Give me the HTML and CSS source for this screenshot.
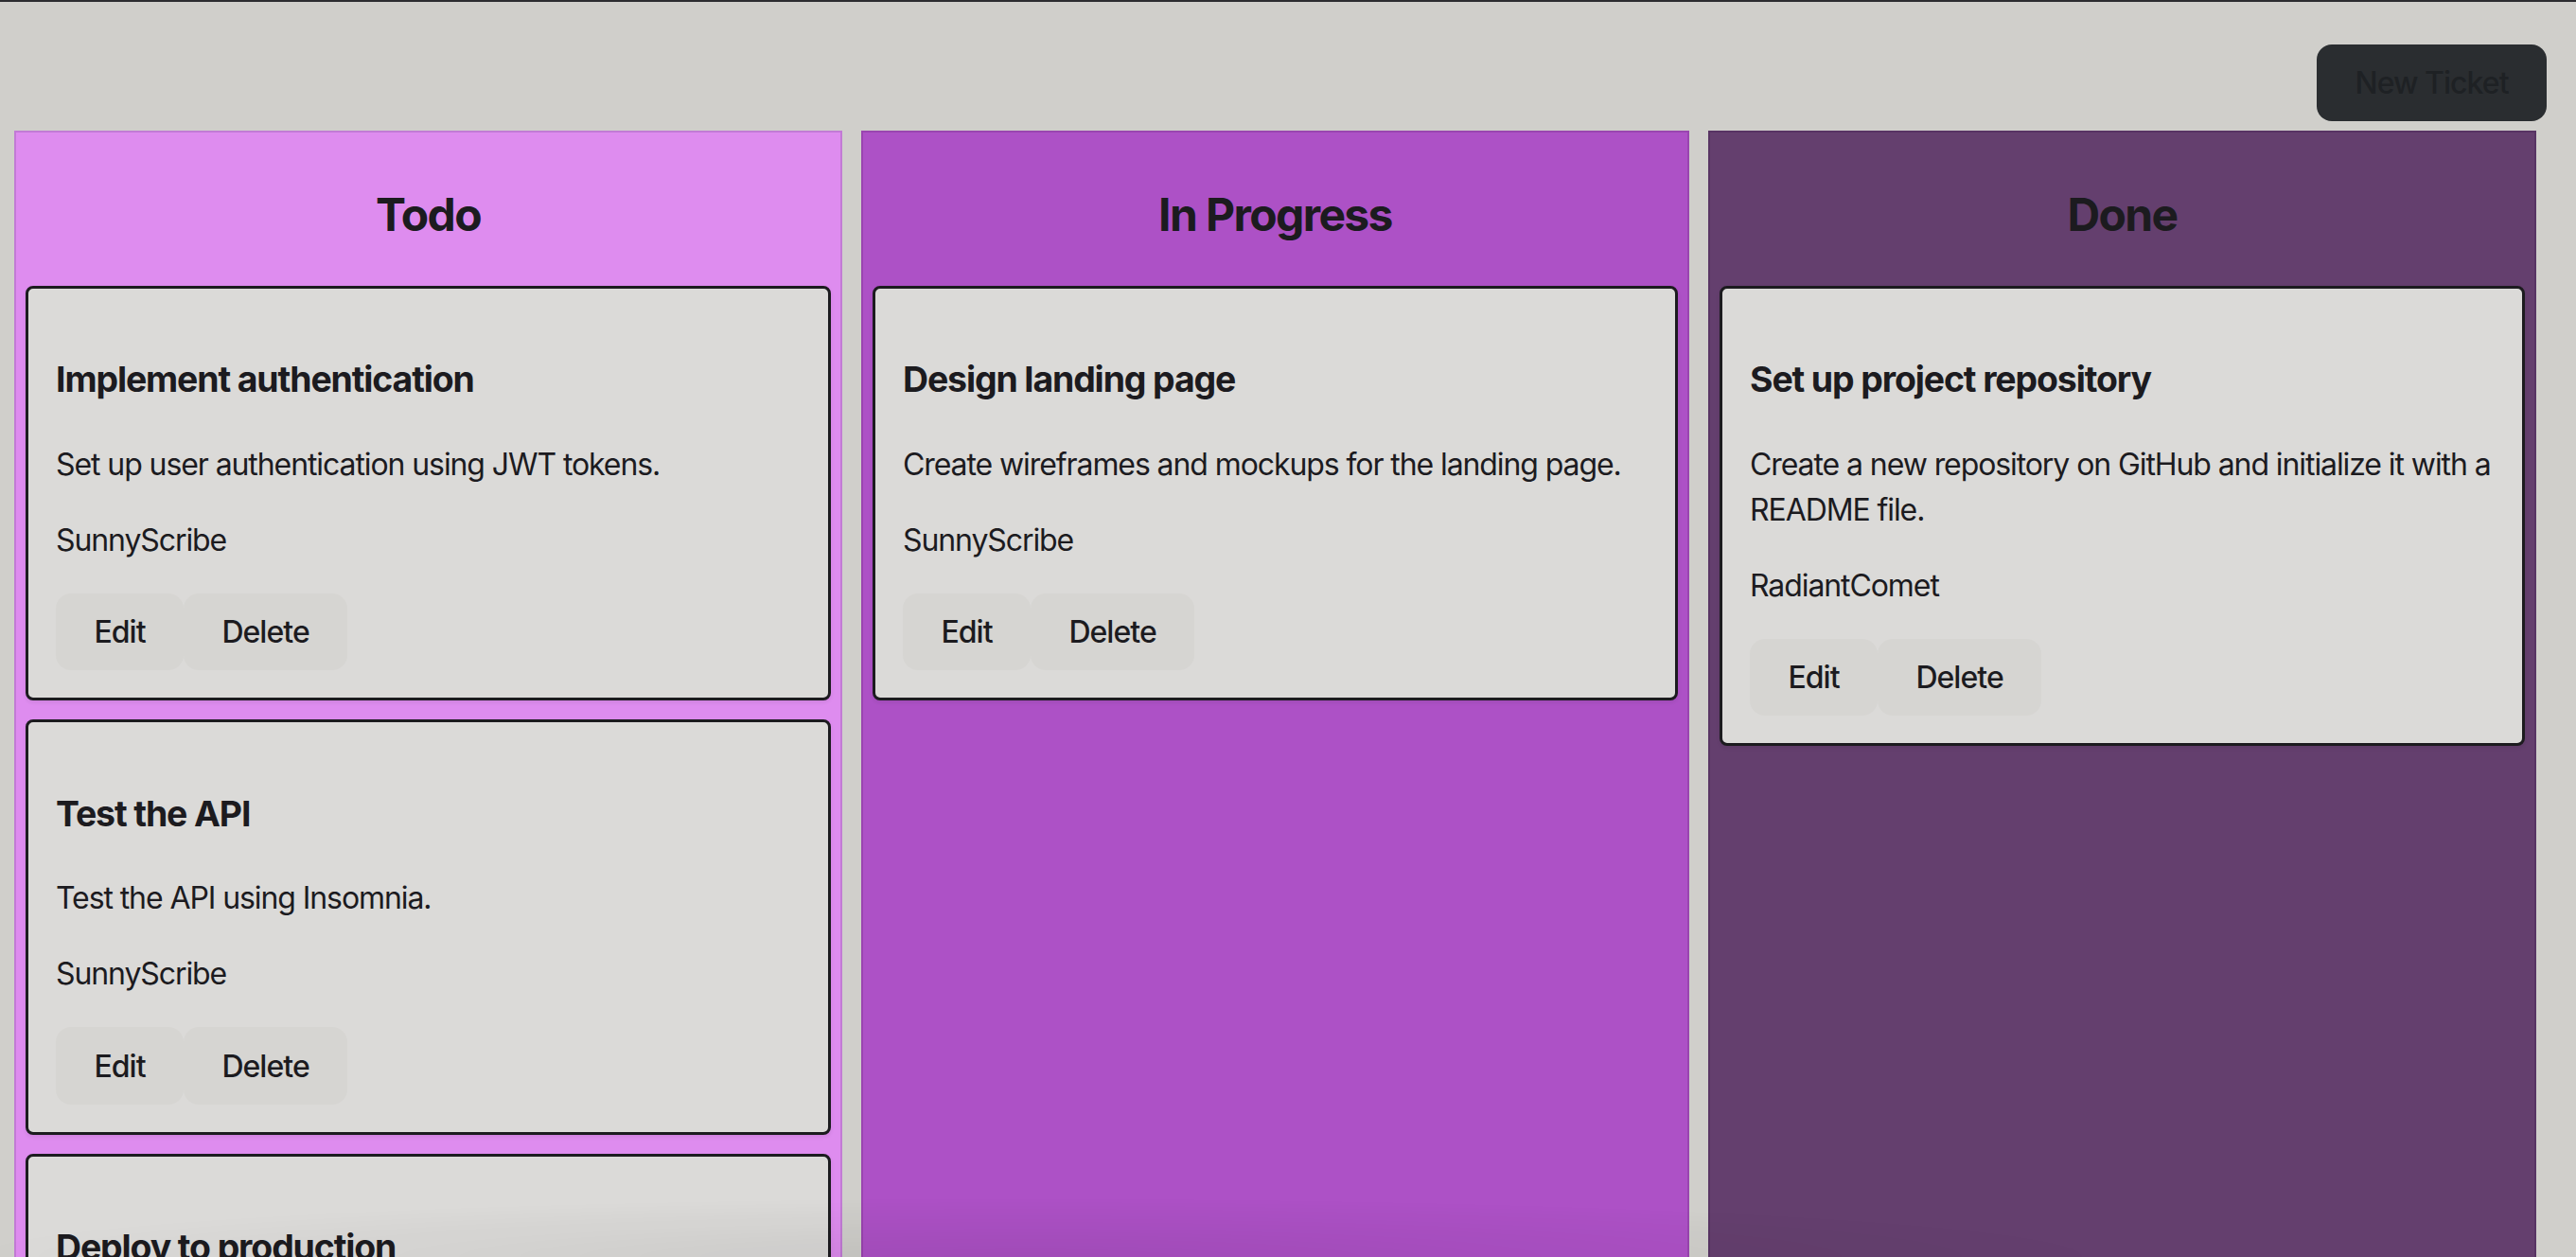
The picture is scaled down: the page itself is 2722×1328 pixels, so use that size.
FILE: index.html
```html
<!DOCTYPE html>
<html lang="en">
<head>
<meta charset="utf-8">
<title>Kanban Board</title>
<link rel="stylesheet" href="styles.css">
</head>
<body>
  <header class="header">
    <button class="new-ticket">New Ticket</button>
  </header>
  <main class="board">
    <section class="column todo">
      <h2>Todo</h2>
      <div class="card">
        <h3>Implement authentication</h3>
        <p>Set up user authentication using JWT tokens.</p>
        <p>SunnyScribe</p>
        <div class="actions"><button>Edit</button><button>Delete</button></div>
      </div>
      <div class="card">
        <h3>Test the API</h3>
        <p>Test the API using Insomnia.</p>
        <p>SunnyScribe</p>
        <div class="actions"><button>Edit</button><button>Delete</button></div>
      </div>
      <div class="card">
        <h3>Deploy to production</h3>
        <p>Deploy the application to Render.</p>
        <p>RadiantComet</p>
        <div class="actions"><button>Edit</button><button>Delete</button></div>
      </div>
    </section>
    <section class="column progress">
      <h2>In Progress</h2>
      <div class="card">
        <h3>Design landing page</h3>
        <p>Create wireframes and mockups for the landing page.</p>
        <p>SunnyScribe</p>
        <div class="actions"><button>Edit</button><button>Delete</button></div>
      </div>
    </section>
    <section class="column done">
      <h2>Done</h2>
      <div class="card">
        <h3>Set up project repository</h3>
        <p>Create a new repository on GitHub and initialize it with a README file.</p>
        <p>RadiantComet</p>
        <div class="actions"><button>Edit</button><button>Delete</button></div>
      </div>
    </section>
  </main>
</body>
</html>
```

FILE: styles.css
```css
html, body {
  margin: 0;
  padding: 0;
}
body {
  background: #d0cfcb;
  border-top: 2px solid #2c2c30;
  font-family: Inter, "Noto Sans", sans-serif;
  font-size: 32px;
  line-height: 1.5;
  letter-spacing: -0.034em;
  color: #1c1b1f;
  overflow: hidden;
  height: 1326px;
  position: relative;
}
body::after {
  content: "";
  position: fixed;
  left: 0;
  right: 0;
  bottom: 0;
  height: 90px;
  pointer-events: none;
  background: radial-gradient(ellipse 60% 100% at 40% 100%, rgba(0,0,0,0.07), rgba(0,0,0,0) 70%);
}
.header {
  display: flex;
  justify-content: flex-end;
  padding: 45px 31px 10px 0;
}
button {
  font-family: inherit;
  font-size: 32px;
  font-weight: 500;
  line-height: normal;
  letter-spacing: -0.03em;
  padding: 19.2px 38.4px;
  border: 2px solid transparent;
  border-radius: 16px;
  background: #d6d5d2;
  color: #1c1b1f;
  cursor: pointer;
}
.new-ticket {
  background: #2a2d30;
  color: #1e2124;
}
.board {
  display: flex;
  gap: 20px;
  padding-left: 15px;
  align-items: stretch;
}
.column {
  box-sizing: border-box;
  width: 875px;
  flex: none;
  padding: 11px 10px 10px;
  border: 2px solid;
}
.column h2 {
  font-size: 48px;
  font-weight: 700;
  line-height: 1.5;
  letter-spacing: -0.034em;
  margin: 39.84px 0 38.84px;
  text-align: center;
}
.todo {
  background: #de8cef;
  border-color: #c27bd5;
}
.progress {
  background: #ad51c6;
  border-color: #9a45b0;
}
.done {
  background: #643f6e;
  border-color: #583464;
}
.card {
  background: #dbdad8;
  border: 3px solid #1c1b1f;
  border-radius: 8px;
  padding: 31px 29px 29px;
  margin-bottom: 20px;
  box-shadow: 0 2px 4px rgba(0,0,0,0.08);
}
.card h3 {
  font-size: 37.44px;
  font-weight: 700;
  line-height: 1.5;
  letter-spacing: -0.03em;
  margin: 37.44px 0;
}
.card p {
  margin: 32px 0;
}
.actions {
  display: flex;
}
```
